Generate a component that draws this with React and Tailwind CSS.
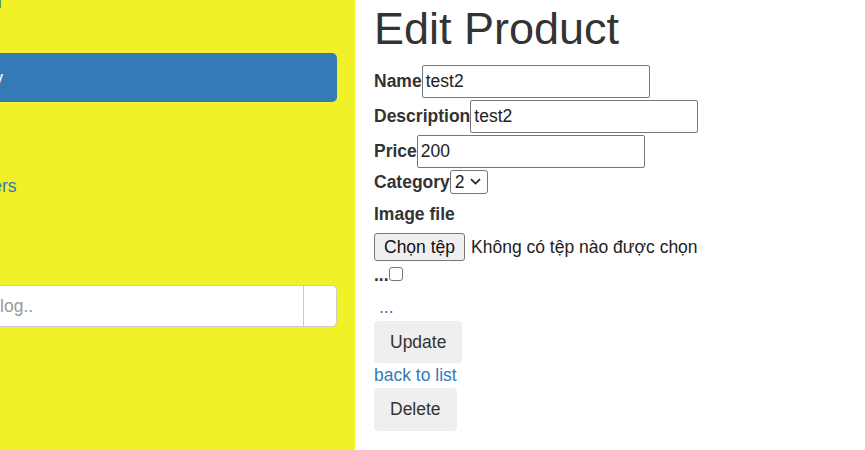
import React from 'react';

const fieldRows = [
  { label: 'Name', value: 'test2' },
  { label: 'Description', value: 'test2' },
  { label: 'Price', value: '200' },
];

function TextField({ value }) {
  return (
    <div className="w-[228px] h-[33px] border border-[#767676] rounded-[2px] bg-white px-[3px] flex items-center leading-[24px] text-[#222]">
      {value}
    </div>
  );
}

function Sidebar() {
  return (
    <aside className="w-[355px] h-[450px] shrink-0 bg-[#f0f126] overflow-hidden">
      {/* sidebar is scrolled sideways: only the right part shows */}
      <div className="ml-[-84px] w-[421px] flex flex-col">
        <div className="h-[53px]">
          <a className="block -mt-[10px] leading-[24px] text-[#337ab7]">Dashboard</a>
        </div>
        <div className="h-[49px] rounded-[5px] bg-[#337ab7] text-white pl-[16px] flex items-center leading-[24px]">
          Category
        </div>
        <a className="h-[49px] pl-[14px] flex items-center leading-[24px] text-[#337ab7]">Products</a>
        <a className="mt-[10px] h-[49px] pl-[16px] flex items-center leading-[24px] text-[#337ab7]">Customers</a>
        <div className="mt-[75px] h-[42px] flex border border-[#ccc] rounded-[5px] bg-white">
          <div className="flex-1 pl-[13px] flex items-center leading-[24px] text-[#999]">Search blog..</div>
          <div className="w-[33px] border-l border-[#ccc]" />
        </div>
      </div>
    </aside>
  );
}

export default function App() {
  return (
    <div className="flex w-[865px] h-[450px] overflow-hidden bg-white text-[17.5px] text-[#333] font-['Liberation_Sans',Arial,sans-serif]">
      <Sidebar />
      <main className="flex-1 pl-[19px]">
        <h1 className="mt-[4px] mb-[11px] text-[45px] leading-[49.5px] font-normal">Edit Product</h1>

        <div className="flex flex-col gap-[2px]">
          {fieldRows.map(f => (
            <div key={f.label} className="flex items-baseline">
              <label className="font-bold leading-[24px]">{f.label}</label>
              <TextField value={f.value} />
            </div>
          ))}
          <div className="flex items-baseline">
            <label className="font-bold leading-[24px]">Category</label>
            <div className="h-[24px] w-[38px] border border-[#767676] rounded-[3px] bg-white pl-[4px] flex items-center leading-[24px] text-[#222]">
              2
              <svg className="ml-[5px]" width="11" height="7" viewBox="0 0 11 7">
                <path d="M1 1.2l4.5 4.3 4.5-4.3" fill="none" stroke="#222" strokeWidth="1.7" />
              </svg>
            </div>
          </div>
        </div>

        <label className="block mt-[8px] font-bold leading-[24px]">Image file</label>
        <div className="mt-[7px] flex items-center gap-[6px]">
          <button className="h-[28px] px-[9px] bg-[#efefef] border border-[#767676] rounded-[3px] text-[#111] leading-[24px]">
            Chọn tệp
          </button>
          <span className="leading-[24px] text-[#222]">Không có tệp nào được chọn</span>
        </div>

        <div className="mt-[2px] h-[24px] flex items-start">
          <span className="font-bold leading-[24px]">...</span>
          <span className="mt-[4px] w-[14px] h-[14px] border border-[#767676] rounded-[3px] bg-white" />
        </div>

        <a className="block mt-[8px] ml-[5px] leading-[24px] text-[#337ab7]">...</a>

        <button className="mt-[2px] h-[42px] px-[16px] bg-[#efefef] rounded-[4px] leading-[24px]">Update</button>
        <a className="block leading-[24px] text-[#337ab7]">back to list</a>
        <button className="mt-[1px] h-[43px] px-[16px] bg-[#efefef] rounded-[4px] leading-[24px]">Delete</button>
      </main>
    </div>
  );
}
